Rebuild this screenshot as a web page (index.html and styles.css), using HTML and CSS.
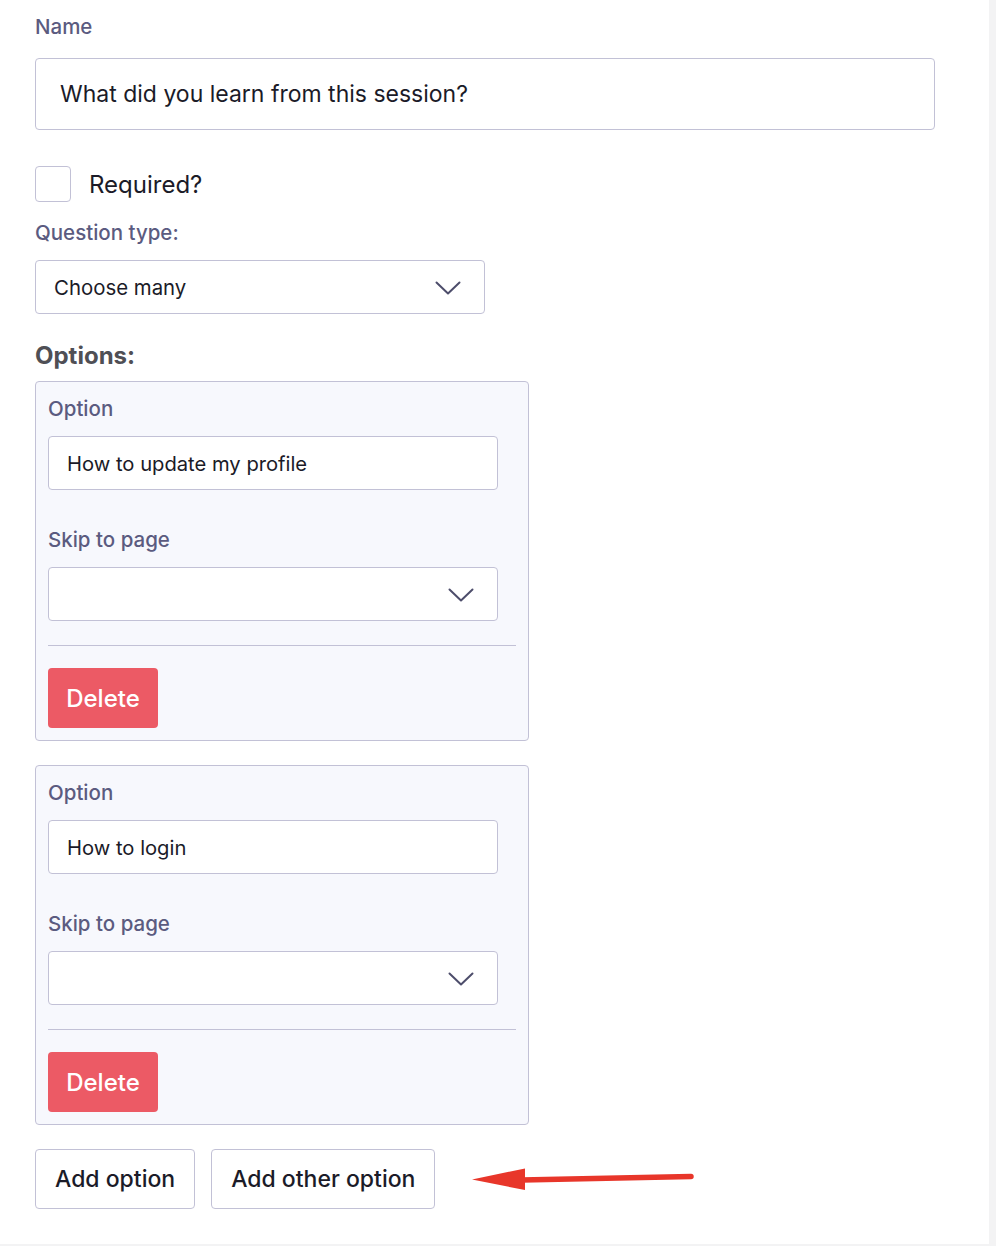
FILE: index.html
```html
<!DOCTYPE html>
<html lang="en">
<head>
<meta charset="utf-8">
<title>Question editor</title>
<link rel="stylesheet" href="styles.css">
</head>
<body>
<div class="page">
  <form class="form">
    <label class="label label-name">Name</label>
    <div class="input input-big">What did you learn from this session?</div>

    <div class="check-row">
      <span class="checkbox"></span>
      <span class="check-label">Required?</span>
    </div>

    <label class="label label-qtype">Question type:</label>
    <div class="select select-type">
      <span class="select-text">Choose many</span>
      <svg class="chev" width="26" height="14" viewBox="0 0 26 14"><path d="M1.5 1.5 L13 12.5 L24.5 1.5" fill="none" stroke="#4d4d6b" stroke-width="2" stroke-linecap="round" stroke-linejoin="round"/></svg>
    </div>

    <h3 class="options-title">Options:</h3>

    <div class="card">
      <label class="label">Option</label>
      <div class="input input-small">How to update my profile</div>
      <label class="label label-skip">Skip to page</label>
      <div class="select select-small">
        <span class="select-text"></span>
        <svg class="chev" width="26" height="14" viewBox="0 0 26 14"><path d="M1.5 1.5 L13 12.5 L24.5 1.5" fill="none" stroke="#4d4d6b" stroke-width="2" stroke-linecap="round" stroke-linejoin="round"/></svg>
      </div>
      <hr class="divider">
      <button type="button" class="btn-delete">Delete</button>
    </div>

    <div class="card">
      <label class="label">Option</label>
      <div class="input input-small">How to login</div>
      <label class="label label-skip">Skip to page</label>
      <div class="select select-small">
        <span class="select-text"></span>
        <svg class="chev" width="26" height="14" viewBox="0 0 26 14"><path d="M1.5 1.5 L13 12.5 L24.5 1.5" fill="none" stroke="#4d4d6b" stroke-width="2" stroke-linecap="round" stroke-linejoin="round"/></svg>
      </div>
      <hr class="divider">
      <button type="button" class="btn-delete">Delete</button>
    </div>

    <div class="actions">
      <button type="button" class="btn-outline">Add option</button>
      <button type="button" class="btn-outline">Add other option</button>
      <svg class="arrow" width="226" height="30" viewBox="0 0 226 30"><path d="M50 16 L219 12.5" stroke="#e8362a" stroke-width="5.5" stroke-linecap="round" fill="none"/><path d="M0 15.5 L53 4.5 L53 26 Z" fill="#e8362a"/></svg>
    </div>
  </form>
</div>
</body>
</html>
```
FILE: styles.css
```css
html {
  background: #f3f3f4;
}
body {
  margin: 0;
  font-family: "Inter", "Liberation Sans", sans-serif;
  color: #1b1b28;
}
.page {
  width: 989px;
  height: 1244px;
  background: #ffffff;
  box-sizing: border-box;
  padding: 15px 0 0 35px;
}
.form {
  display: flex;
  flex-direction: column;
  align-items: flex-start;
}
.label {
  display: block;
  font-size: 20.5px;
  line-height: 24px;
  font-weight: 500;
  color: #5b5b80;
}
.label-name {
  margin-bottom: 19px;
}
.input {
  box-sizing: border-box;
  background: #fff;
  border: 1px solid #c2c1d6;
  border-radius: 4px;
  display: flex;
  align-items: center;
  color: #1b1b28;
}
.input-big {
  width: 900px;
  height: 72px;
  padding-left: 24px;
  font-size: 23px;
  margin-bottom: 36px;
}
.check-row {
  display: flex;
  align-items: center;
  gap: 18px;
  height: 36px;
  margin-bottom: 19px;
}
.checkbox {
  box-sizing: border-box;
  width: 36px;
  height: 36px;
  border: 1px solid #c2c1d6;
  border-radius: 4px;
  background: #fff;
}
.check-label {
  font-size: 24px;
  color: #1b1b28;
}
.label-qtype {
  margin-bottom: 15px;
}
.select {
  box-sizing: border-box;
  background: #fff;
  border: 1px solid #c2c1d6;
  border-radius: 4px;
  display: flex;
  align-items: center;
  justify-content: space-between;
  height: 54px;
  width: 450px;
  font-size: 20.4px;
  color: #1b1b28;
}
.select-type {
  padding: 0 23px 0 18px;
  margin-bottom: 28px;
}
.select-small {
  padding: 0 23px 0 18px;
}
.chev {
  display: block;
  margin-top: 1px;
}
.options-title {
  margin: 0 0 11px 0;
  font-size: 24px;
  line-height: 28px;
  font-weight: 700;
  color: #4f4f55;
}
.card {
  box-sizing: border-box;
  width: 494px;
  background: #f7f8fd;
  border: 1px solid #c2c1d6;
  border-radius: 4px;
  padding: 15px 12px 12px 12px;
  margin-bottom: 24px;
  display: flex;
  flex-direction: column;
  align-items: flex-start;
}
.card .label {
  margin-bottom: 15px;
}
.input-small {
  width: 450px;
  height: 54px;
  padding-left: 18px;
  font-size: 20.2px;
  margin-bottom: 38px;
}
.card .label-skip {
  margin-bottom: 15px;
}
.divider {
  align-self: stretch;
  border: 0;
  border-top: 1px solid #c2c1d6;
  margin: 24px 0 22px 0;
  height: 0;
}
.btn-delete {
  width: 110px;
  height: 60px;
  border: 0;
  border-radius: 4px;
  background: #ec5a65;
  color: #fff;
  font-family: "Inter", "Liberation Sans", sans-serif;
  font-size: 24px;
  font-weight: 500;
  padding: 0;
}
.actions {
  display: flex;
  align-items: center;
  gap: 16px;
}
.btn-outline {
  box-sizing: border-box;
  height: 60px;
  background: #fff;
  border: 1px solid #c2c1d6;
  border-radius: 4px;
  padding: 0 19px;
  font-family: "Inter", "Liberation Sans", sans-serif;
  font-size: 23px;
  font-weight: 500;
  color: #1b1b28;
}
.arrow {
  display: block;
  margin-left: 21px;
}
```
